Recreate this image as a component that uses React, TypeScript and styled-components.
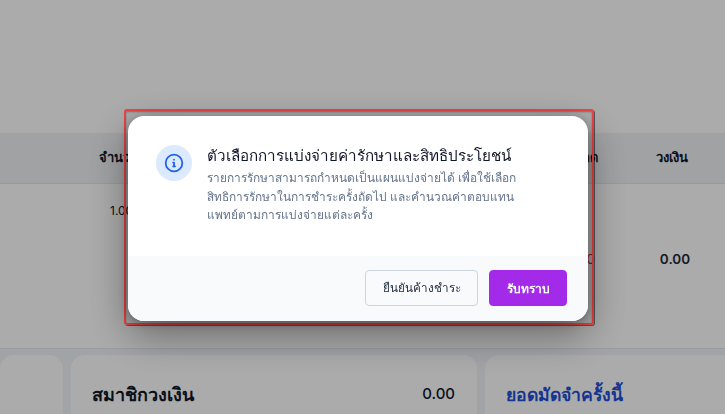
import React from "react";
import styled, { createGlobalStyle } from "styled-components";

const Global = createGlobalStyle`
  html, body { margin: 0; padding: 0; height: 100%; overflow: hidden; background: #fff; }
  body { font-family: Inter, "Noto Sans", "Liberation Sans", sans-serif; color: #0f172a; }
  #root { height: 100%; }
`;
const Page = styled.div`
  width: 725px; height: 414px; overflow: hidden; background: #f1f5f9;
  display: flex; flex-direction: column;
`;
const Panel = styled.section`
  height: 349px; flex: none; background: #fff; display: flex; flex-direction: column;
  border-bottom: 1px solid #e2e8f0; box-sizing: border-box; padding-top: 133px;
`;
const TableHead = styled.div`
  height: 51px; flex: none; box-sizing: border-box; background: #f0f2f4;
  border-bottom: 1px solid #e2e8f0; display: grid; grid-template-columns: 99px 399px 100px 1fr; align-items: center;
  font-size: 13px; font-weight: 700; color: #0f172a;
`;
const HeadCell = styled.div<{ $col: number; $align: string; $pad: string }>`
  grid-column: ${(p) => p.$col};
  text-align: ${(p) => p.$align};
  padding: ${(p) => p.$pad};
  margin-top: -2px;
`;
const TableBody = styled.div`
  flex: 1; display: grid; grid-template-columns: 110px 386px 102px 1fr; grid-template-rows: 50px 1fr;
  font-size: 12px;
`;
const Qty = styled.div`grid-column: 2; grid-row: 1; align-self: end; margin-bottom: 16px;`;
const Discount = styled.div`
  grid-column: 3; grid-row: 2; text-align: right; padding-right: 3px; font-size: 13.5px;
  margin-top: 17px; color: #dc2626;
`;
const Amount = styled.div`
  grid-column: 4; grid-row: 2; text-align: center; font-size: 13.5px; font-weight: 600;
  padding-left: 27px; margin-top: 17px; color: #1e293b;
`;
const Cards = styled.div`
  display: grid; grid-template-columns: 63px 406px 1fr; gap: 8px; padding-top: 6px;
  margin-right: -16px; flex: 1;
`;
const Card = styled.div`
  background: #fff; border-radius: 14px 14px 0 0; padding: 28px 22px 0 21px;
  display: flex; justify-content: space-between; align-items: flex-start;
`;
const CardTitle = styled.div<{ $blue?: boolean }>`
  font-size: ${(p) => (p.$blue ? "17.6px" : "18px")}; font-weight: 700; line-height: 24px;
  color: ${(p) => (p.$blue ? "#1d4ed8" : "#0f172a")};
`;
const CardValue = styled.div`font-size: 15px; font-weight: 500; line-height: 22px; color: #0f172a;`;
const Overlay = styled.div`
  position: fixed; inset: 0; background: rgba(0, 0, 0, 0.33);
`;
const Outline = styled.div`
  position: absolute; left: 124px; top: 109px; width: 470px; height: 216px; box-sizing: border-box;
  border: 2px solid #ef4444; border-radius: 3px; padding: 5px 4px 0 2px;
  box-shadow: 1px 1px 0 rgba(0, 0, 0, 0.5), inset 0 1px 2px rgba(0, 0, 0, 0.35);
`;
const Modal = styled.div`
  width: 460px; height: 205px; background: #fff; border-radius: 16px; overflow: hidden;
  display: flex; flex-direction: column;
  box-shadow: 0 2px 10px rgba(0, 0, 0, 0.3), 0 14px 40px rgba(0, 0, 0, 0.4);
`;
const Content = styled.div`
  flex: 1; display: flex; gap: 15px; padding: 29px 28px 0 28px;
`;
const IconCircle = styled.div`
  width: 36px; height: 36px; border-radius: 50%; background: #dbeafe; color: #2563eb; flex: none;
  display: flex; align-items: center; justify-content: center;
`;
const TextCol = styled.div`display: flex; flex-direction: column;`;
const Title = styled.h2`
  margin: 1px 0 3px; font-size: 15.2px; line-height: 20px; font-weight: 500; color: #0f172a;
`;
const Desc = styled.p`
  margin: 0; font-size: 11.92px; line-height: 18.5px; color: #64748b; width: 330px;
`;
const Footer = styled.div`
  height: 65px; flex: none; background: #f8fafc; display: flex; justify-content: flex-end; align-items: flex-start;
  gap: 11px; padding: 14px 21px 0 0; box-sizing: border-box;
`;
const Button = styled.button<{ $primary?: boolean }>`
  height: 36px; box-sizing: border-box; font-family: inherit; border-radius: 4px;
  font-size: ${(p) => (p.$primary ? "12px" : "11.7px")};
  font-weight: ${(p) => (p.$primary ? 700 : 500)};
  width: ${(p) => (p.$primary ? "78px" : "113px")};
  background: ${(p) => (p.$primary ? "#a32ae8" : "transparent")};
  color: ${(p) => (p.$primary ? "#fff" : "#1e293b")};
  border: 1px solid ${(p) => (p.$primary ? "#a32ae8" : "#cbd5e1")};
  padding: 0;
`;

export default function App() {
  return (
    <>
      <Global />
      <Page>
        <Panel>
          <TableHead>
            <HeadCell $col={2} $align="left" $pad="0">จำนวน</HeadCell>
            <HeadCell $col={3} $align="right" $pad="0">ส่วนลด</HeadCell>
            <HeadCell $col={4} $align="center" $pad="0 0 0 21px">วงเงิน</HeadCell>
          </TableHead>
          <TableBody>
            <Qty>1.00</Qty>
            <Discount>0.00</Discount>
            <Amount>0.00</Amount>
          </TableBody>
        </Panel>
        <Cards>
          <Card />
          <Card>
            <CardTitle>สมาชิกวงเงิน</CardTitle>
            <CardValue>0.00</CardValue>
          </Card>
          <Card>
            <CardTitle $blue>ยอดมัดจำครั้งนี้</CardTitle>
          </Card>
        </Cards>
      </Page>
      <Overlay>
        <Outline>
          <Modal>
            <Content>
              <IconCircle>
                <svg width="20" height="20" viewBox="0 0 24 24" fill="none" stroke="currentColor" strokeWidth="2.2" strokeLinecap="round" strokeLinejoin="round">
                  <circle cx="12" cy="12" r="10" />
                  <path d="M12 16v-4.5h-1" />
                  <path d="M12 8h.01" />
                  <path d="M11 16h2.2" />
                </svg>
              </IconCircle>
              <TextCol>
                <Title>ตัวเลือกการแบ่งจ่ายค่ารักษาและสิทธิประโยชน์</Title>
                <Desc>
                  รายการรักษาสามารถกำหนดเป็นแผนแบ่งจ่ายได้ เพื่อใช้เลือก
                  สิทธิการรักษาในการชำระครั้งถัดไป และคำนวณค่าตอบแทน
                  แพทย์ตามการแบ่งจ่ายแต่ละครั้ง
                </Desc>
              </TextCol>
            </Content>
            <Footer>
              <Button>ยืนยันค้างชำระ</Button>
              <Button $primary>รับทราบ</Button>
            </Footer>
          </Modal>
        </Outline>
      </Overlay>
    </>
  );
}
